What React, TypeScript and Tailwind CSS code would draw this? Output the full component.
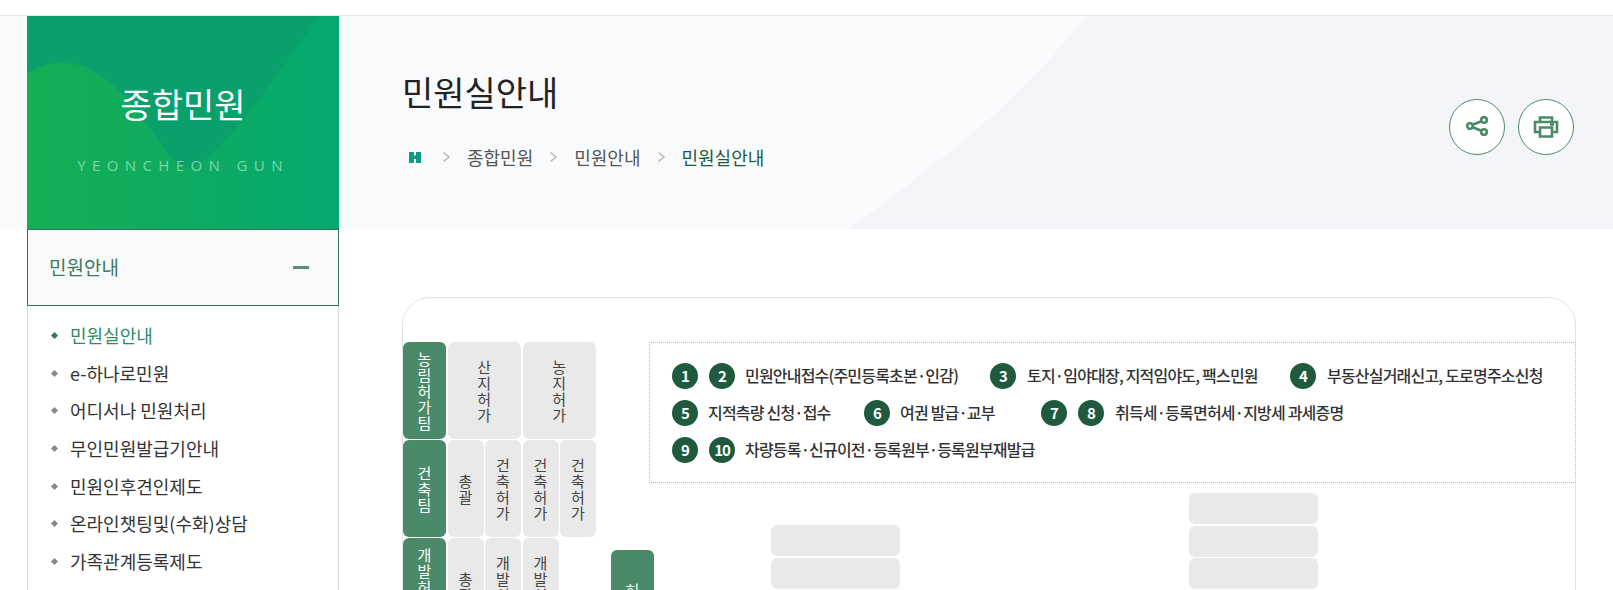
const sideMenu = [
  '민원실안내',
  'e-하나로민원',
  '어디서나 민원처리',
  '무인민원발급기안내',
  '민원인후견인제도',
  '온라인챗팅및(수화)상담',
  '가족관계등록제도',
  '여권민원',
]

function Badge({ n }: { n: number }) {
  return (
    <span className="flex h-[26px] w-[26px] shrink-0 items-center justify-center rounded-full bg-[#1f5a3e] text-[15px] font-bold tracking-[-1px] text-white">
      {n}
    </span>
  )
}

function GreenCell({ text, className }: { text: string; className?: string }) {
  return (
    <div className={`flex items-center justify-center rounded-[6px] bg-[#4a8a68] text-[15px] leading-[16px] text-white ${className ?? ''}`}>
      <span className="w-[15px] break-all text-center">{text}</span>
    </div>
  )
}

function GrayCell({ text, className }: { text: string; className?: string }) {
  return (
    <div className={`flex items-center justify-center rounded-[6px] bg-[#e9e9e9] text-[15px] leading-[16px] text-[#444] ${className ?? ''}`}>
      <span className="w-[15px] break-all text-center">{text}</span>
    </div>
  )
}

function Room({ className }: { className?: string }) {
  return <div className={`absolute h-[31px] w-[129px] rounded-[6px] bg-[#e9e9e9] ${className ?? ''}`} />
}

function Chevron({ className }: { className?: string }) {
  return (
    <svg className={className} width="9" height="12" viewBox="0 0 9 12" fill="none" stroke="#bbb" strokeWidth="1.6">
      <path d="M1.5 1.5 L7 6 L1.5 10.5" />
    </svg>
  )
}

function Label({ text, className }: { text: string; className?: string }) {
  return <span className={`pb-[2px] ${className ?? ''}`}>{text}</span>
}

export default function App() {
  return (
    <div className="h-[590px] overflow-hidden bg-white font-['Noto_Sans_CJK_KR','Noto_Sans',sans-serif]">
      <div className="box-content h-[15px] border-b border-[#e6e6e6]" />

      <div className="relative flex">
        {/* header band behind the sidebar and title */}
        <div className="absolute left-0 right-0 top-0 h-[213px] overflow-hidden bg-[#f9fafc]">
          <svg className="absolute inset-0" width="1613" height="213" viewBox="0 0 1613 213">
            <path d="M1087 0 C1045 50 993 105 930 151 C900 175 875 195 847 213 L1613 213 L1613 0 Z" fill="#f4f5f9" />
          </svg>
        </div>

        <aside className="relative ml-[27px] w-[312px] shrink-0">
          <div className="relative h-[213px] overflow-hidden bg-gradient-to-r from-[#15ae54] to-[#04a96e]">
            <svg className="absolute inset-0" width="312" height="213" viewBox="0 0 312 213">
              <path d="M0 0 L0 57 C40 35 75 50 110 95 C135 125 150 165 172 148 C205 128 255 50 293 0 Z" fill="#0aa06c" />
            </svg>
            <div className="relative flex h-full flex-col items-center pt-[63px]">
              <h2 className="text-[34px] font-normal leading-[50px] text-white">종합민원</h2>
              <p className="mt-[26px] font-['Open_Sans',sans-serif] text-[15px] leading-[20px] tracking-[6.4px] text-[#7ed6a8]">YEONCHEON GUN</p>
            </div>
          </div>

          <div className="flex h-[77px] items-center justify-between border border-[#2f7a5c] bg-[#f8f9fb] pl-[21px] pr-[29px]">
            <span className="text-[19px] text-[#3c7a5e]">민원안내</span>
            <span className="h-[3px] w-[16px] bg-[#5a8f76]" />
          </div>

          <ul className="flex flex-col border-x border-[#d5d9dc] pl-[24px] pt-[11px]">
            {sideMenu.map((item, i) => (
              <li key={item} className={`flex h-[37.6px] items-center gap-[13px] text-[18px] ${i === 0 ? 'text-[#2f8a66]' : 'text-[#333]'}`}>
                <span className={`h-[5px] w-[5px] rotate-45 ${i === 0 ? 'bg-[#2f7a5c]' : 'bg-[#888]'}`} />
                {item}
              </li>
            ))}
          </ul>
        </aside>

        <main className="relative ml-[63px] mr-[37px] flex-1">
          <div className="flex h-[213px] items-start justify-between">
            <div className="pt-[51px]">
              <h1 className="text-[34px] font-normal leading-[50px] text-[#222]">민원실안내</h1>
              <nav className="mt-[26px] flex items-center text-[18px] leading-[28px] text-[#555]">
                <svg className="ml-[7px] mr-[21px]" width="12" height="11" viewBox="0 0 12 11" fill="#0f9a85">
                  <path d="M0 0 H5 V3.5 H7 V0 H12 V11 H7 V7 H5 V11 H0 Z" />
                </svg>
                <Chevron className="mr-[16px]" />
                <span>종합민원</span>
                <Chevron className="mx-[16px]" />
                <span>민원안내</span>
                <Chevron className="mx-[16px]" />
                <span className="text-[#1f5a3e]">민원실안내</span>
              </nav>
            </div>
            <div className="mt-[83px] flex gap-[13px] pr-[2px]">
              <button className="flex h-[56px] w-[56px] items-center justify-center rounded-full border border-[#4a8a68] bg-white">
                <svg className="-mt-[2px]" width="24" height="20" viewBox="0 0 24 20" fill="none" stroke="#4a8a68" strokeWidth="2.6">
                  <circle cx="5" cy="10" r="2.8" />
                  <circle cx="19" cy="4" r="2.8" />
                  <circle cx="19" cy="16" r="2.8" />
                  <path d="M7.6 8.8 L16.4 5.2 M7.6 11.2 L16.4 14.8" />
                </svg>
              </button>
              <button className="flex h-[56px] w-[56px] items-center justify-center rounded-full border border-[#4a8a68] bg-white">
                <svg width="26" height="22" viewBox="0 0 26 22" fill="none" stroke="#4a8a68" strokeWidth="2.6">
                  <path d="M7 6 V1.5 H19 V6" />
                  <path d="M7 16 H2 V6 H24 V16 H19" />
                  <path d="M7 11.5 H19 V20.5 H7 Z" />
                  <path d="M17 8.5 H21" />
                </svg>
              </button>
            </div>
          </div>

          <section className="relative mt-[68px] h-[400px] rounded-t-[28px] border border-[#e2e2e2] pt-[44px]">
            <div className="grid w-[195px] grid-cols-[43px_36px_36px_36px_36px] grid-rows-[97px_97px_97px] gap-x-[1.5px] gap-y-[1px]">
              <GreenCell text="농림허가팀" />
              <GrayCell text="산지허가" className="col-span-2" />
              <GrayCell text="농지허가" className="col-span-2" />
              <GreenCell text="건축팀" />
              <GrayCell text="총괄" />
              <GrayCell text="건축허가" />
              <GrayCell text="건축허가" />
              <GrayCell text="건축허가" />
              <GreenCell text="개발허가팀" />
              <GrayCell text="총괄" />
              <GrayCell text="개발허가" />
              <GrayCell text="개발허가" />
            </div>

            <div className="absolute left-[208px] top-[252px] flex h-[95px] w-[43px] items-center justify-center rounded-[6px] bg-[#4a8a68] text-[15px] leading-[16px] text-white">
              <span className="w-[15px] break-all text-center">허가</span>
            </div>

            <Room className="left-[786px] top-[195px]" />
            <Room className="left-[786px] top-[228px]" />
            <Room className="left-[786px] top-[260px]" />
            <Room className="left-[786px] top-[293px]" />
            <Room className="left-[368px] top-[227px]" />
            <Room className="left-[368px] top-[260px]" />
            <Room className="left-[368px] top-[292px]" />

            <div className="absolute -right-px left-[246px] top-[44px] flex h-[141px] flex-col gap-[11px] border border-dotted border-[#bbb] bg-white pl-[22px] pt-[20px] text-[16px] font-medium tracking-[-0.8px] text-[#333]">
              <div className="flex h-[26px] items-center">
                <Badge n={1} />
                <span className="w-[11px]" />
                <Badge n={2} />
                <Label className="ml-[10px] w-[245px]" text="민원안내접수(주민등록초본·인감)" />
                <Badge n={3} />
                <Label className="ml-[11px] w-[263px]" text="토지·임야대장, 지적임야도, 팩스민원" />
                <Badge n={4} />
                <Label className="ml-[11px]" text="부동산실거래신고, 도로명주소신청" />
              </div>
              <div className="flex h-[26px] items-center">
                <Badge n={5} />
                <Label className="ml-[10px] w-[156px]" text="지적측량 신청·접수" />
                <Badge n={6} />
                <Label className="ml-[10px] w-[141px]" text="여권 발급·교부" />
                <Badge n={7} />
                <span className="w-[11px]" />
                <Badge n={8} />
                <Label className="ml-[11px]" text="취득세·등록면허세·지방세 과세증명" />
              </div>
              <div className="flex h-[26px] items-center">
                <Badge n={9} />
                <span className="w-[11px]" />
                <Badge n={10} />
                <Label className="ml-[10px]" text="차량등록·신규이전·등록원부·등록원부재발급" />
              </div>
            </div>
          </section>
        </main>
      </div>
    </div>
  )
}
